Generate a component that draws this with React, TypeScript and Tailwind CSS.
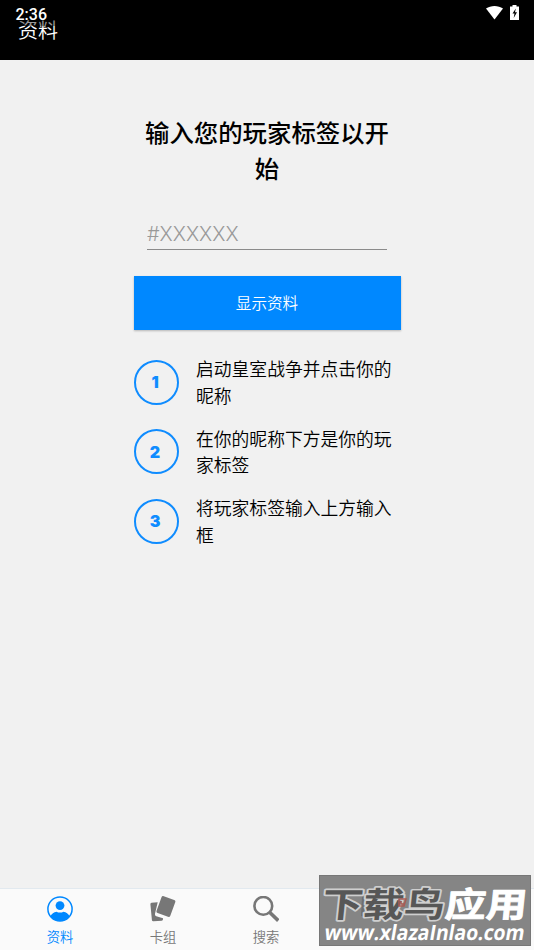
import React, { useState } from 'react';

interface Tab {
  id: string;
  label: string;
  icon: React.ReactNode;
}

const ProfileIcon = () => (
  <svg className="w-[26px] h-[26px]" viewBox="0 0 26 26" fill="none">
    <defs>
      <clipPath id="avatar">
        <circle cx="13" cy="13" r="12" />
      </clipPath>
    </defs>
    <circle cx="13" cy="13" r="12.100" stroke="currentColor" strokeWidth="1.500" />
    <circle cx="13" cy="9.600" r="4.400" fill="currentColor" />
    <path
      clipPath="url(#avatar)"
      d="M3.500 20c1.200-2.300 3.300-3.700 6-4.300 2.200 1.200 4.800 1.200 7 0 2.700.6 4.800 2 6 4.300L20 26H6z"
      fill="currentColor"
    />
  </svg>
);

const CardsIcon = () => (
  <svg className="w-[26px] h-[26px]" viewBox="0 0 26 26" fill="currentColor">
    <path d="M1.500 6.800 7.700 6.200 5 17.800a2 2 0 0 0 1.300 2.500l6.700 2v1a1.500 1.500 0 0 1-1.300 1.400l-8.200.600a1.500 1.500 0 0 1-1.600-1.400L.4 8.200A1.300 1.300 0 0 1 1.500 6.800z" />
    <rect x="8.600" y="1.500" width="14.600" height="18" rx="1.800" transform="rotate(20 15.900 10.500)" />
  </svg>
);

const SearchIcon = () => (
  <svg className="w-[26px] h-[26px]" viewBox="0 0 26 26" fill="none" stroke="currentColor">
    <circle cx="10.300" cy="9.900" r="8.900" strokeWidth="2.600" />
    <path d="m16.300 16 9 8.600" strokeWidth="3.600" />
  </svg>
);

const tabs: Tab[] = [
  { id: 'profile', label: '资料', icon: <ProfileIcon /> },
  { id: 'decks', label: '卡组', icon: <CardsIcon /> },
  { id: 'search', label: '搜索', icon: <SearchIcon /> },
];

const steps = [
  '启动皇室战争并点击你的昵称',
  '在你的昵称下方是你的玩家标签',
  '将玩家标签输入上方输入框',
];

// Translucent, the app bar title shows through its lower edge
const StatusBar = () => (
  <div className="absolute inset-x-0 top-0 flex h-[26px] justify-between bg-black/40 pt-[5px] pr-[15px] pl-[15.500px] text-white">
    <span className="font-['Roboto'] text-[16px] font-medium leading-[19px]">2:36</span>
    <div className="flex gap-[7px]">
      <svg className="w-[17px] h-[15px]" viewBox="0 0 17 15" fill="currentColor">
        <path d="M0 3.500C4.800 0 12.200 0 17 3.500L8.500 14.500z" />
      </svg>
      <svg className="w-[9px] h-[15px]" viewBox="0 0 9 15">
        <path d="M2.500 0h4v1.500H9V15H0V1.500h2.500z" fill="currentColor" />
        <path d="M5.800 3.500 2.500 8.500h2L3.700 13 7 7.300H5z" fill="black" />
      </svg>
    </div>
  </div>
);

const Header = () => (
  <header className="relative h-[60px] shrink-0 bg-black pt-5 text-white">
    <h1 className="pl-[18px] text-[20px] font-[350] leading-[20px]">资料</h1>
    <StatusBar />
  </header>
);

const Watermark = () => (
  <svg
    className="absolute right-[3px] bottom-[4px] w-[212px] h-[71px]"
    viewBox="0 0 212 71"
    fontFamily="'Noto Sans CJK SC', sans-serif"
  >
    <rect width="212" height="71" fill="#858585" />
    <rect x="0.500" y="0.500" width="211" height="70" fill="none" stroke="#777" />
    <path d="M43 22l16 3-3 19-14-3z" fill="#6f6f6f" />
    <g fontSize="41" fontWeight="700" transform="translate(5 42) skewX(-6) scale(1 .84)" strokeLinejoin="round">
      <text x="-3" y="0" fill="#575757" stroke="#cfcfcf" strokeWidth="4" paintOrder="stroke">下载鸟</text>
      <text x="120" y="0" fill="#fff" stroke="#fff" strokeWidth="1">应用</text>
    </g>
    <path d="M80 24h7l-2 7h-5zM82 26v3h3" fill="none" stroke="#a95b54" strokeWidth="1.500" />
    <text
      x="5"
      y="65"
      textLength="200"
      lengthAdjust="spacingAndGlyphs"
      fontFamily="'Open Sans', sans-serif"
      fontSize="21"
      fontWeight="700"
      fill="#fff"
      transform="translate(11 0) skewX(-10)"
    >
      www.xlazaInlao.com
    </text>
  </svg>
);

export default function App() {
  const [active, setActive] = useState('profile');
  const [tag, setTag] = useState('');

  return (
    <div className="relative flex h-screen flex-col overflow-hidden bg-[#f1f1f1] font-['Noto_Sans_CJK_SC',sans-serif] text-black">
      <Header />

      <main className="mx-auto flex w-[267px] flex-1 flex-col pt-[54px]">
        <h2 className="px-[11px] text-center text-[24.400px] font-medium leading-[36px]">
          输入您的玩家标签以开始
        </h2>
        <input
          value={tag}
          onChange={(e) => setTag(e.target.value)}
          placeholder="#XXXXXX"
          className="mx-[13.500px] mt-[30px] h-[34px] border-b border-[#8b8b8b] pt-[2px] font-['Inter',sans-serif] text-[19.900px] font-light outline-none placeholder:text-[#999]"
        />
        <button className="mt-[26px] h-[53.500px] shrink-0 bg-[#0088ff] text-[15.600px] font-[350] text-white shadow-[0_1px_2px_rgba(0,0,0,0.25)]">
          显示资料
        </button>

        <ol className="mt-[25.500px] flex flex-col gap-[16px]">
          {steps.map((step, index) => (
            <li key={step} className="flex items-center gap-[17.500px]">
              <span className="mt-px flex size-[45px] shrink-0 items-center justify-center rounded-full border-2 border-[#0f8cff] pr-[2px] font-['Inter',sans-serif] text-[16px] font-black text-[#0f8cff]">
                {index + 1}
              </span>
              <p className="text-[17.800px] font-[350] leading-[26.800px]">{step}</p>
            </li>
          ))}
        </ol>
      </main>

      <nav className="flex h-[62px] shrink-0 border-t border-[#e2e9ef] bg-[#fafafa] pl-[8.500px]">
        {tabs.map((tab) => (
          <button
            key={tab.id}
            onClick={() => setActive(tab.id)}
            className={`flex w-[103px] flex-col items-center pt-[7px] text-[13.300px] font-[350] leading-[20px] ${
              active === tab.id ? 'text-[#0088ff]' : 'text-[#777]'
            }`}
          >
            {tab.icon}
            <span className="mt-[5px]">{tab.label}</span>
          </button>
        ))}
      </nav>

      <Watermark />
    </div>
  );
}
